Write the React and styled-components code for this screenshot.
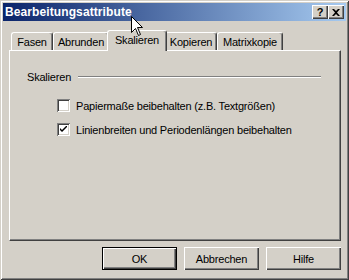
import React from "react";
import styled, { createGlobalStyle } from "styled-components";

const Global = createGlobalStyle`
    html, body {
        margin: 0;
        padding: 0;
        background: #d4d0c8;
    }
    * {
        box-sizing: border-box;
    }
`

const Window = styled.div`
    position: relative;
    width: 349px;
    height: 280px;
    padding: 3px;
    display: flex;
    flex-direction: column;
    background: #d4d0c8;
    font-family: "Liberation Sans", Arial, sans-serif;
    font-size: 11px;
    letter-spacing: -0.2px;
    color: #000;
    box-shadow: inset 1px 1px 0 #d4d0c8, inset -1px -1px 0 #404040,
        inset 2px 2px 0 #ffffff, inset -2px -2px 0 #808080;
`

const TitleBar = styled.div`
    height: 18px;
    display: flex;
    align-items: center;
    justify-content: space-between;
    padding: 0 2px 0 2px;
    background: linear-gradient(to right, #0a246a, #a6caf0);
`

const Title = styled.span`
    color: #fff;
    font-weight: bold;
    font-size: 12px;
    letter-spacing: 0.1px;
`

const TitleButtons = styled.div`
    display: flex;
`

const TitleButton = styled.div`
    width: 16px;
    height: 14px;
    display: flex;
    align-items: center;
    justify-content: center;
    background: #d4d0c8;
    font-weight: bold;
    font-size: 11px;
    line-height: 1;
    box-shadow: inset 1px 1px 0 #ffffff, inset -1px -1px 0 #404040,
        inset -2px -2px 0 #808080;
`

const Body = styled.div`
    flex: 1;
    display: flex;
    flex-direction: column;
    padding: 9px 5px 0 6px;
`

const TabStrip = styled.div`
    height: 20px;
    display: flex;
    align-items: flex-end;
    padding-left: 2px;
    position: relative;
    z-index: 1;
`

const Tab = styled.div`
    position: relative;
    width: ${(p) => p.$w}px;
    height: ${(p) => (p.$active ? 21 : 18)}px;
    margin: ${(p) => (p.$active ? "0 -2px -1px -2px" : "0")};
    z-index: ${(p) => (p.$active ? 2 : 1)};
    display: flex;
    align-items: ${(p) => (p.$active ? "flex-start" : "center")};
    padding-top: ${(p) => (p.$active ? "3px" : "0")};
    justify-content: center;
    background: #d4d0c8;
    border-top: 1px solid #fff;
    border-left: 1px solid #fff;
    border-right: 1px solid #404040;
    border-radius: 3px 3px 0 0;
    box-shadow: inset -1px 0 0 #808080;
    white-space: nowrap;
`

const Panel = styled.div`
    height: 191px;
    display: flex;
    flex-direction: column;
    padding: 19px 19px 0 17px;
    border-top: 1px solid #fff;
    border-left: 1px solid #fff;
    border-right: 1px solid #404040;
    border-bottom: 1px solid #404040;
    box-shadow: inset -1px -1px 0 #808080;
`

const GroupHeader = styled.div`
    display: flex;
    align-items: center;
    gap: 7px;
    height: 13px;
`

const Rule = styled.div`
    flex: 1;
    height: 2px;
    border-top: 1px solid #808080;
    border-bottom: 1px solid #fff;
`

const Options = styled.div`
    display: flex;
    flex-direction: column;
    gap: 11px;
    margin: 16px 0 0 30px;
`

const CheckRow = styled.label`
    display: flex;
    align-items: center;
    gap: 6px;
    height: 13px;
`

const Box = styled.span`
    width: 13px;
    height: 13px;
    display: flex;
    align-items: center;
    justify-content: center;
    background: #fff;
    box-shadow: inset 1px 1px 0 #808080, inset -1px -1px 0 #fff,
        inset 2px 2px 0 #404040, inset -2px -2px 0 #d4d0c8;
`

const ButtonRow = styled.div`
    display: flex;
    justify-content: flex-end;
    gap: 7px;
    margin-top: 6px;
`

const Button = styled.div`
    width: 75px;
    height: 23px;
    display: flex;
    align-items: center;
    justify-content: center;
    background: #d4d0c8;
    box-shadow: ${(p) =>
        p.$default
            ? "inset 0 0 0 1px #000, inset 2px 2px 0 #fff, inset -2px -2px 0 #404040, inset -3px -3px 0 #808080"
            : "inset 1px 1px 0 #fff, inset -1px -1px 0 #404040, inset -2px -2px 0 #808080"};
`

const Pointer = styled.svg`
    position: absolute;
    left: 131px;
    top: 16px;
    z-index: 5;
`

const Checkbox = ({ checked, children }) => (
    <CheckRow>
        <Box>
            {checked && (
                <svg width="7" height="7" viewBox="0 0 7 7">
                    <path d="M0 2 L0 4 L2 6 L7 1 L7 -1 L2 4 Z" fill="#000" />
                </svg>
            )}
        </Box>
        {children}
    </CheckRow>
)

const tabs = [
    { label: "Fasen", w: 42 },
    { label: "Abrunden", w: 56 },
    { label: "Skalieren", w: 60, active: true },
    { label: "Kopieren", w: 52 },
    { label: "Matrixkopie", w: 66 },
]

const App = () => {
    return (
        <Window>
            <Global />
            <TitleBar>
                <Title>Bearbeitungsattribute</Title>
                <TitleButtons>
                    <TitleButton>?</TitleButton>
                    <TitleButton>
                        <svg width="8" height="7" viewBox="0 0 8 7">
                            <path d="M0 0 H2 L4 2 L6 0 H8 L5 3.5 L8 7 H6 L4 5 L2 7 H0 L3 3.5 Z" fill="#000" />
                        </svg>
                    </TitleButton>
                </TitleButtons>
            </TitleBar>
            <Body>
                <TabStrip>
                    {tabs.map((t) => (
                        <Tab key={t.label} $w={t.w} $active={t.active}>
                            {t.label}
                        </Tab>
                    ))}
                </TabStrip>
                <Panel>
                    <GroupHeader>
                        <span>Skalieren</span>
                        <Rule />
                    </GroupHeader>
                    <Options>
                        <Checkbox>Papiermaße beibehalten (z.B. Textgrößen)</Checkbox>
                        <Checkbox checked>Linienbreiten und Periodenlängen beibehalten</Checkbox>
                    </Options>
                </Panel>
                <ButtonRow>
                    <Button $default>OK</Button>
                    <Button>Abbrechen</Button>
                    <Button>Hilfe</Button>
                </ButtonRow>
            </Body>
            {/* mouse pointer over the title bar */}
            <Pointer width="13" height="21" viewBox="0 0 13 21">
                <path
                    d="M0.5 0.5 V16.5 L4.5 12.5 L7.5 19.5 L9.5 18.5 L6.5 11.5 H11.5 Z"
                    fill="#fff"
                    stroke="#000"
                    strokeWidth="1"
                />
            </Pointer>
        </Window>
    );
};

export default App;
